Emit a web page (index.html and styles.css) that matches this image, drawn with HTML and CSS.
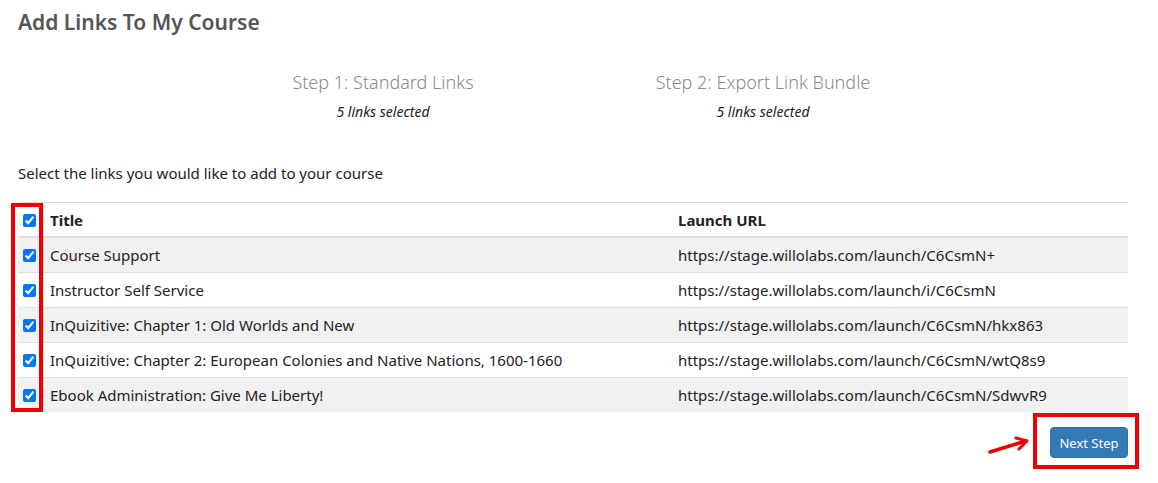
FILE: index.html
```html
<!DOCTYPE html>
<html>
<head>
<meta charset="utf-8">
<link rel="stylesheet" href="styles.css">
</head>
<body>
<div class="page">
  <h1 class="title">Add Links To My Course</h1>
  <div class="steps">
    <div class="step">
      <div class="step-name">Step 1: Standard Links</div>
      <div class="step-count">5 links selected</div>
    </div>
    <div class="step">
      <div class="step-name">Step 2: Export Link Bundle</div>
      <div class="step-count">5 links selected</div>
    </div>
  </div>
  <p class="intro">Select the links you would like to add to your course</p>
  <div class="table-wrap">
    <table class="links">
      <thead>
        <tr><th class="cb"><input type="checkbox" checked></th><th class="t">Title</th><th>Launch URL</th></tr>
      </thead>
      <tbody>
        <tr><td class="cb"><input type="checkbox" checked></td><td class="t">Course Support</td><td>https://stage.willolabs.com/launch/C6CsmN+</td></tr>
        <tr><td class="cb"><input type="checkbox" checked></td><td class="t">Instructor Self Service</td><td>https://stage.willolabs.com/launch/i/C6CsmN</td></tr>
        <tr><td class="cb"><input type="checkbox" checked></td><td class="t">InQuizitive: Chapter 1: Old Worlds and New</td><td>https://stage.willolabs.com/launch/C6CsmN/hkx863</td></tr>
        <tr><td class="cb"><input type="checkbox" checked></td><td class="t">InQuizitive: Chapter 2: European Colonies and Native Nations, 1600-1660</td><td>https://stage.willolabs.com/launch/C6CsmN/wtQ8s9</td></tr>
        <tr><td class="cb"><input type="checkbox" checked></td><td class="t">Ebook Administration: Give Me Liberty!</td><td>https://stage.willolabs.com/launch/C6CsmN/SdwvR9</td></tr>
      </tbody>
    </table>
    <div class="mark-col"></div>
  </div>
  <div class="actions">
    <div class="btn-wrap">
      <svg class="arrow" width="44" height="20" viewBox="0 0 44 20">
        <path d="M2 16 L38 5" stroke="#e00" stroke-width="3.5" fill="none" stroke-linecap="round"/>
        <path d="M28 2 L39 5 L31 13" stroke="#e00" stroke-width="3" fill="none" stroke-linecap="round" stroke-linejoin="round"/>
      </svg>
      <button class="next">Next Step</button>
      <div class="mark-btn"></div>
    </div>
  </div>
</div>
</body>
</html>
```
FILE: styles.css
```css
html, body { margin: 0; padding: 0; background: #fff; }
body { font-family: "Noto Sans", "Open Sans", sans-serif; color: #222; }
.page { padding: 0 30px 0 18px; }
.title {
  margin: 0; padding-top: 8px;
  font-size: 21px; font-weight: 600; color: #555; line-height: 28px;
}
.steps { display: flex; justify-content: center; margin-top: 33px; }
.step { width: 380px; text-align: center; }
.step-name { font-size: 18px; font-weight: 300; color: #8a8a8a; line-height: 26px; }
.step-count { font-size: 14px; font-style: italic; color: #222; line-height: 20px; margin-top: 7px; }
.intro { margin: 41px 0 0; font-size: 15px; line-height: 20px; color: #222; }
.table-wrap { position: relative; margin-top: 19px; }
.links { width: 100%; border-collapse: collapse; font-size: 15px; }
.links th, .links td { text-align: left; padding: 0; height: 34px; border-top: 1px solid #ddd; vertical-align: middle; }
.links th { font-weight: 700; color: #222; border-bottom: 2px solid #ddd; height: 33px; }
.links tbody tr:nth-child(odd) { background: #f1f1f1; }
.links .cb { width: 27px; padding-left: 5px; }
.links .t { width: 628px; }
.links input { width: 13px; height: 13px; margin: 0; vertical-align: middle; accent-color: #0075ff; position: relative; top: -1px; }
.mark-col { position: absolute; left: -7px; top: 1px; width: 24px; height: 201px; border: 4px solid #e00; }
.actions { display: flex; justify-content: flex-end; margin-top: 15px; padding-bottom: 20px; }
.btn-wrap { position: relative; }
.next {
  display: block; width: 78px; height: 31px;
  background: #337ab7; color: #fff; border: 1px solid #2e6da4; border-radius: 4px;
  font-family: inherit; font-size: 13px; padding: 0;
}
.mark-btn { position: absolute; left: -17px; top: -14px; width: 98px; height: 48px; border: 4px solid #e00; }
.arrow { position: absolute; left: -62px; top: 9px; }
```
